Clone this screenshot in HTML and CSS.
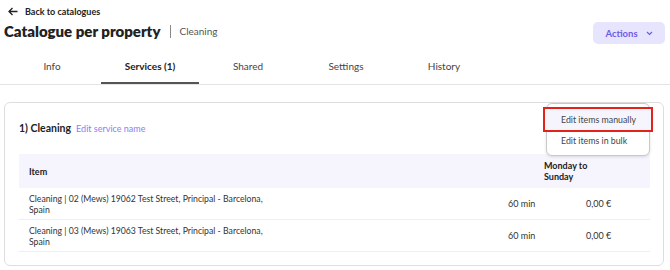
FILE: index.html
```html
<!DOCTYPE html>
<html lang="en">
<head>
  <meta charset="UTF-8">
  <title>Catalogue per property</title>
  <link rel="stylesheet" href="styles.css">
</head>
<body>

<a class="back" href="#">
  <svg width="10" height="9" viewBox="0 0 10 9"><path d="M9.5 4.5H1M4.5 1L1 4.5 4.5 8" fill="none" stroke="#222" stroke-width="1.3"/></svg>
  <span>Back to catalogues</span>
</a>

<div class="head">
  <h1>Catalogue per property <span class="sep"></span> <span class="sub">Cleaning</span></h1>
  <button class="actions">Actions
    <svg width="7" height="5" viewBox="0 0 7 5"><path d="M1 1l2.5 2.5L6 1" fill="none" stroke="#6c5ce7" stroke-width="1.2"/></svg>
  </button>
</div>

<div class="tabs">
  <div class="tab">Info</div>
  <div class="tab active">Services (1)</div>
  <div class="tab">Shared</div>
  <div class="tab">Settings</div>
  <div class="tab">History</div>
</div>

<div class="card">
  <div class="service-title">
    <strong>1) Cleaning</strong>
    <a href="#" class="edit-link">Edit service name</a>
  </div>

  <div class="thead">
    <div>Item</div>
    <div>Monday to Sunday</div>
    <div></div>
  </div>
  <div class="row">
    <div class="item-name">Cleaning | 02 (Mews) 19062 Test Street, Principal - Barcelona, Spain</div>
    <div>60 min</div>
    <div>0,00 €</div>
  </div>
  <div class="row">
    <div class="item-name">Cleaning | 03 (Mews) 19063 Test Street, Principal - Barcelona, Spain</div>
    <div>60 min</div>
    <div>0,00 €</div>
  </div>

  <div class="menu">
    <div class="menu-item selected">Edit items manually</div>
    <div class="menu-item">Edit items in bulk</div>
  </div>
</div>

</body>
</html>
```

FILE: styles.css
```css
body {
  margin: 0;
  font-family: Lato, "Open Sans", sans-serif;
  color: #222;
  background: #fff;
}

.back {
  display: flex;
  align-items: center;
  gap: 7px;
  padding: 4px 0 0 8px;
  height: 14px;
  font-size: 9px;
  font-weight: 700;
  color: #222;
  text-decoration: none;
}

.head {
  display: flex;
  justify-content: space-between;
  align-items: center;
  height: 26px;
  padding: 2px 5px 0 4px;
}

h1 {
  margin: 0;
  font-size: 15px;
  font-weight: 800;
  display: flex;
  align-items: center;
  position: relative;
  top: -2px;
}

.sep {
  display: inline-block;
  width: 1px;
  height: 13px;
  background: #888;
  margin: 0 8px 0 10px;
}

.sub {
  font-size: 10px;
  font-weight: 400;
  color: #555;
}

.actions {
  display: flex;
  align-items: center;
  gap: 8px;
  width: 72px;
  height: 22px;
  justify-content: center;
  border: none;
  border-radius: 5px;
  background: #e7e4fd;
  color: #6c5ce7;
  font-family: inherit;
  font-size: 9.5px;
  font-weight: 700;
}

.tabs {
  display: flex;
  padding-left: 3px;
  margin-top: 9px;
  border-bottom: 1px solid #e4e4e4;
}

.tab {
  width: 98px;
  height: 29px;
  line-height: 23px;
  text-align: center;
  font-size: 10px;
  color: #444;
  box-sizing: border-box;
}

.tab.active {
  font-weight: 700;
  color: #222;
  border-bottom: 2px solid #555;
}

.card {
  position: relative;
  margin: 17px 6px 0 4px;
  padding: 19px 13px 13px 14px;
  border: 1px solid #dedede;
  border-radius: 6px;
}

.service-title {
  display: flex;
  align-items: baseline;
  gap: 5px;
  height: 17px;
  margin-bottom: 15px;
  font-size: 10.5px;
}

.edit-link {
  font-size: 9px;
  color: #8b7ef5;
  text-decoration: none;
}

.thead, .row {
  display: grid;
  font-size: 9px;
}

.thead {
  grid-template-columns: 1fr 66px 50px;
  background: #f6f5fe;
  font-weight: 700;
  align-items: center;
  height: 34px;
  line-height: 11px;
}

.thead div {
  padding-left: 10px;
}

.row {
  grid-template-columns: 1fr 78px 74px;
  align-items: center;
  height: 32px;
  line-height: 11px;
  color: #333;
  border-bottom: 1px solid #eee;
  box-sizing: border-box;
}

.row:last-of-type {
  border-bottom: none;
}

.row div {
  padding: 0 10px;
}

.row .item-name {
  max-width: 240px;
  font-size: 8.7px;
}

.menu {
  position: absolute;
  top: 0;
  right: 13px;
  width: 102px;
  padding: 5px 0 4px;
  background: #fff;
  border: 1px solid #c9c9c9;
  border-radius: 6px;
  box-shadow: 0 1px 3px rgba(0, 0, 0, 0.12);
}

.menu-item {
  height: 21px;
  line-height: 21px;
  padding-left: 14px;
  font-size: 8.8px;
  color: #444;
}

.menu-item.selected {
  background: #f6f5fe;
  outline: 2px solid #e2231a;
  margin: 0 -2px;
  padding-left: 16px;
}
```
